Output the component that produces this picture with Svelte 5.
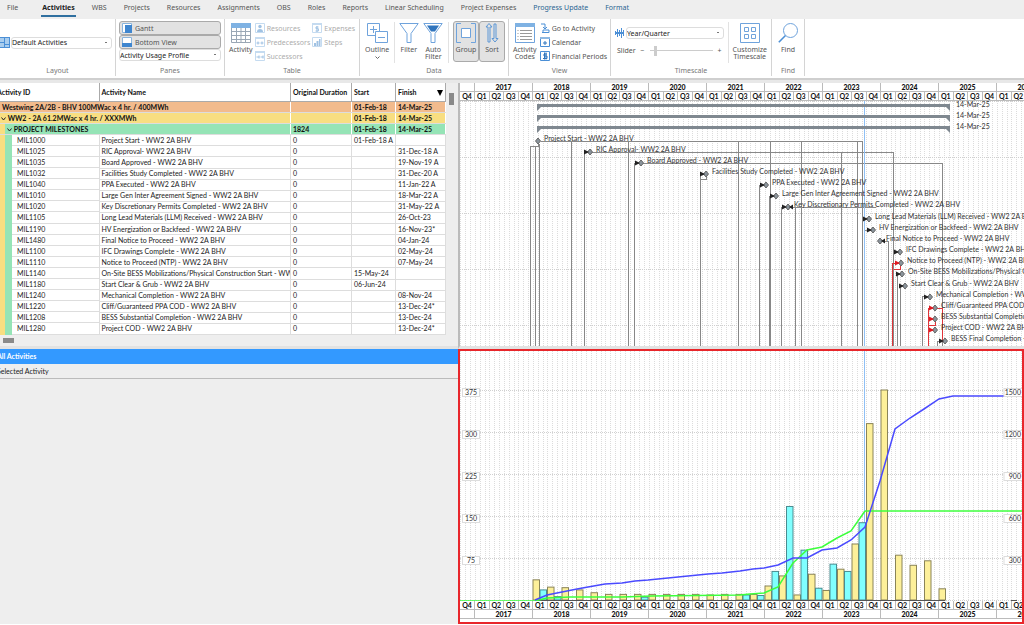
<script>
	const tabs = [
		'File', 'Activities', 'WBS', 'Projects', 'Resources', 'Assignments', 'OBS', 'Roles',
		'Reports', 'Linear Scheduling', 'Project Expenses', 'Progress Update', 'Format'
	]
	const contextTabs = ['Progress Update', 'Format']
	let activeTab = $state('Activities')

	const groups = [
		{ name: 'Westwing 2A/2B - BHV 100MWac x 4 hr. / 400MWh', level: 0, duration: '' },
		{ name: 'WW2 - 2A 61.2MWac x 4 hr. / XXXMWh', level: 1, duration: '' },
		{ name: 'PROJECT MILESTONES', level: 2, duration: '1824' }
	]

	const activities = [
		['MIL1000', 'Project Start - WW2 2A BHV', '01-Feb-18 A', ''],
		['MIL1025', 'RIC Approval- WW2 2A BHV', '', '31-Dec-18 A'],
		['MIL1035', 'Board Approved - WW2 2A BHV', '', '19-Nov-19 A'],
		['MIL1032', 'Facilities Study Completed - WW2 2A BHV', '', '31-Dec-20 A'],
		['MIL1040', 'PPA Executed - WW2 2A BHV', '', '11-Jan-22 A'],
		['MIL1010', 'Large Gen Inter Agreement Signed - WW2 2A BHV', '', '18-Mar-22 A'],
		['MIL1020', 'Key Discretionary Permits Completed - WW2 2A BHV', '', '31-May-22 A'],
		['MIL1105', 'Long Lead Materials (LLM) Received - WW2 2A BHV', '', '26-Oct-23'],
		['MIL1190', 'HV Energization or Backfeed - WW2 2A BHV', '', '16-Nov-23*'],
		['MIL1480', 'Final Notice to Proceed - WW2 2A BHV', '', '04-Jan-24'],
		['MIL1100', 'IFC Drawings Complete - WW2 2A BHV', '', '02-May-24'],
		['MIL1110', 'Notice to Proceed (NTP) - WW2 2A BHV', '', '07-May-24'],
		['MIL1140', 'On-Site BESS Mobilizations/Physical Construction Start - WW2 2A BHV', '15-May-24', ''],
		['MIL1180', 'Start Clear & Grub - WW2 2A BHV', '06-Jun-24', ''],
		['MIL1240', 'Mechanical Completion - WW2 2A BHV', '', '08-Nov-24'],
		['MIL1220', 'Cliff/Guaranteed PPA COD - WW2 2A BHV', '', '13-Dec-24*'],
		['MIL1208', 'BESS Substantial Completion - WW2 2A BHV', '', '13-Dec-24'],
		['MIL1280', 'Project COD - WW2 2A BHV', '', '13-Dec-24*']
	]

	const years = [2017, 2018, 2019, 2020, 2021, 2022, 2023, 2024, 2025, 2026, 2027, 2028, 2029, 2030]

	// milestone x on the timescale; arrow: which side the link arrives from
	const marks = [
		{ x: 78, arrow: '' },
		{ x: 130, arrow: 'in' },
		{ x: 181, arrow: 'in' },
		{ x: 246, arrow: 'in' },
		{ x: 306, arrow: 'in' },
		{ x: 316, arrow: 'in' },
		{ x: 328, arrow: 'both' },
		{ x: 409, arrow: 'in' },
		{ x: 413, arrow: 'in' },
		{ x: 420, arrow: 'out' },
		{ x: 440, arrow: 'in' },
		{ x: 441, arrow: 'in', critical: true },
		{ x: 442, arrow: 'in' },
		{ x: 445, arrow: 'in' },
		{ x: 470, arrow: 'in' },
		{ x: 475, arrow: 'in', critical: true },
		{ x: 475, arrow: 'in', critical: true },
		{ x: 475, arrow: 'in', critical: true },
		{ x: 485, arrow: 'in' }
	].map((m, i) => ({
		...m,
		y: Math.round(39.5 + i * 11.16),
		label: activities[i]?.[1] ?? 'BESS Final Completion - WW2 2A BHV'
	}))

	const links = [
		'M80 40H402V246', 'M70 246V45H78V42', 'M75 246V45', 'M79 246V42',
		'M111 246V40', 'M168 246V40', 'M278 246V40', 'M310 246V40', 'M341 246V40', 'M397 246V40',
		'M124 246V51H433V246', 'M381 246V51', 'M174 246V62H482V246',
		'M240 246V73H246V78H240', 'M299 246V84H305', 'M309 246V95H315', 'M321 246V106H415',
		'M335 246V106', 'M402 246V117H408', 'M404 246V129H411', 'M423 140H428V246',
		'M433 246V151H439', 'M437 246V173H441', 'M440 246V184H445', 'M462 246V195H470', 'M477 246V240H484'
	]
	const criticalLinks = ['M432 246V162H440V168H433', 'M468 246V207H475', 'M468 218H475V224H468', 'M468 229H475', 'M475 207H482V240']

	// [budgeted, actual] per quarter from 2018 Q1
	const usage = [
		[36, 18], [23, 6], [22, 0], [18, 0],
		[13, 0], [10, 0], [10, 0], [10, 5],
		[10, 0], [10, 0], [10, 0], [10, 0],
		[9, 0], [10, 0], [10, 9], [10, 8],
		[25, 51], [43, 167], [9, 89], [46, 21],
		[17, 64], [55, 51], [100, 138], [315, 0],
		[375, 0], [80, 0], [62, 0], [70, 0],
		[20, 0]
	]
	const base = 249
	const quarter = 14.5
	const bars = usage.flatMap(([budget, actual], i) => {
		const x = 73 + i * quarter
		return [
			{ x, h: budget * 0.56, kind: 'budget' },
			{ x: x + 7, h: actual * 0.56, kind: 'actual' }
		].filter((b) => b.h)
	})

	const cumBudget =
		'75,249 87,244 102,241 117,238 128,236 145,233 162,232 175,230 188,229 208,227 228,225 248,223 262,222 280,220 293,218 304,217 318,214 333,207 347,207 362,199 377,197 391,189 405,176 420,130 435,78 450,67 464,58 479,48 493,45 544,45'
	const cumActual =
		'0,250 75,250 87,247 110,246 162,246 192,245 280,244 290,243 304,242 318,236 333,212 347,199 362,196 377,187 391,180 405,160'

	const levels = [1, 2, 3, 4, 5]
</script>

{#snippet timescale(bottom)}
	<div class="timescale" class:bottom>
		<div class="year part">
			<b></b>
			<div class="quarters"><span>Q4</span></div>
		</div>
		{#each years as year}
			<div class="year">
				<b>{year}</b>
				<div class="quarters"><span>Q1</span><span>Q2</span><span>Q3</span><span>Q4</span></div>
			</div>
		{/each}
	</div>
{/snippet}

<div class="app">
	<nav class="tabs">
		{#each tabs as tab}
			<button
				class:active={tab === activeTab}
				class:file={tab === 'File'}
				class:context={contextTabs.includes(tab)}
				onclick={() => (activeTab = tab)}>{tab}</button>
		{/each}
	</nav>

	<div class="ribbon">
		<section class="layout">
			<div class="tools">
				<svg width="10" height="11" viewBox="0 0 10 11">
					<rect width="10" height="11" fill="#4b8fd6" />
					<path d="M0 1h4v4H0zM5 1h4v6H5zM0 6h4v4H0zM5 8h4v2H5z" fill="#a9cdee" />
				</svg>
				<select aria-label="Layout"><option>Default Activities</option></select>
			</div>
			<h2>Layout</h2>
		</section>

		<section class="panes">
			<div class="tools stack">
				<button class="pressed">
					<svg width="10" height="10" viewBox="0 0 10 10"><path d="M.5.5h9v9h-9z" fill="#fff" stroke="#8ab4dc" /><path d="M3 2h7v8H3z" fill="#3f86cf" /></svg>
					Gantt
				</button>
				<button class="pressed">
					<svg width="10" height="10" viewBox="0 0 10 10"><path d="M.5.5h9v9h-9z" fill="#fff" stroke="#8ab4dc" /><path d="M0 6h10v4H0z" fill="#3f86cf" /></svg>
					Bottom View
				</button>
				<select aria-label="Bottom view"><option>Activity Usage Profile</option></select>
			</div>
			<h2>Panes</h2>
		</section>

		<section class="table-group">
			<div class="tools">
				<button class="big">
					<svg width="20" height="20" viewBox="0 0 20 20" fill="none">
						<path d="M.5.5h19v19H.5z" fill="#fff" stroke="#9aa7b5" />
						<path d="M0 0h20v5H0z" fill="#7fb2e3" />
						<path d="M5.500 5v15M10 5v15M14.500 5v15M0 8.500h20M0 12.500h20M0 16.500h20" stroke="#9aa7b5" />
					</svg>
					Activity
				</button>
				<div class="column">
					<button disabled>
						<svg width="10" height="10" viewBox="0 0 10 10"><path d="M.5.5h9v9h-9z" fill="none" stroke="#8db8e2" /><circle cx="5" cy="3.500" r="1.700" fill="#4387c9" /><path d="M2 9q0-3 3-3t3 3z" fill="#4387c9" /></svg>
						Resources
					</button>
					<button disabled>
						<svg width="10" height="10" viewBox="0 0 10 10"><path d="M.5.5h9v9h-9z" fill="none" stroke="#8db8e2" /><path d="M0 0h10v2H0z" fill="#8db8e2" /><path d="M1.500 6h3M8.500 6h-3M3 4.500v3M7 4.500v3" stroke="#4387c9" /></svg>
						Predecessors
					</button>
					<button disabled>
						<svg width="10" height="10" viewBox="0 0 10 10"><path d="M.5.5h9v9h-9z" fill="none" stroke="#8db8e2" /><path d="M0 0h10v2H0z" fill="#8db8e2" /><path d="M1.500 6h3M5.500 6h3M4 4.500v3M8 4.500v3" stroke="#4387c9" /></svg>
						Successors
					</button>
				</div>
				<div class="column">
					<button disabled>
						<svg width="10" height="10" viewBox="0 0 10 10"><path d="M.5.5h9v9h-9z" fill="none" stroke="#8db8e2" /><path d="M0 0h10v2H0z" fill="#8db8e2" /><path d="M6.500 4H4v1.700h2.400V8H3.500M5 3v6" fill="none" stroke="#4387c9" /></svg>
						Expenses
					</button>
					<button disabled>
						<svg width="10" height="10" viewBox="0 0 10 10"><path d="M.5.5h9v9h-9z" fill="none" stroke="#8db8e2" /><path d="M2 6h2v3H2zM4.500 4h2v5h-2zM7 2h1.500v7H7z" fill="#4387c9" /></svg>
						Steps
					</button>
				</div>
			</div>
			<h2>Table</h2>
		</section>

		<section class="data">
			<div class="tools">
				<button class="big">
					<svg width="21" height="20" viewBox="0 0 21 20" fill="none" stroke="#6fa3dc">
						<path d="M8 12.500H.5V.5h12V8M8.500 8.500h12v11h-12zM3 6.500h7M6.500 3v7M11 14.500h7" />
					</svg>
					Outline
					<svg width="5" height="3" viewBox="0 0 5 3" fill="none" stroke="#666"><path d="M.5.5l2 2 2-2" /></svg>
				</button>
				<i></i>
				<button class="big">
					<svg width="20" height="20" viewBox="0 0 20 20" fill="#fff" stroke="#6fa3dc"><path d="M.8.5h18.400L12 10.500v9H8v-9z" /></svg>
					Filter
				</button>
				<button class="big">
					<svg width="20" height="20" viewBox="0 0 20 20"><path d="M.8.5h18.400L12 10.500v9H8v-9z" fill="#fff" stroke="#6fa3dc" /><path d="M4 2.500h12l-4 6H8z" fill="#2f74bd" /></svg>
					Auto<br />Filter
				</button>
				<i></i>
				<div class="toggles">
					<button class="big pressed">
						<svg width="20" height="20" viewBox="0 0 20 20" fill="none" stroke="#6fa3dc"><path d="M5 .5H.5v19H5M15 .5h4.500v19H15" /><path d="M5.500 5.500h9v9h-9z" fill="#fff" /></svg>
						Group
					</button>
					<button class="big pressed">
						<svg width="14" height="20" viewBox="0 0 14 20" fill="none" stroke="#5c97d6"><path d="M3 19V4H1l3-3.500L7 4H5v15zM9 1v14.500H7l3 3.500 3-3.500h-2V1z" /></svg>
						Sort
					</button>
				</div>
			</div>
			<h2>Data</h2>
		</section>

		<section class="view">
			<div class="tools">
				<button class="big">
					<svg width="20" height="20" viewBox="0 0 20 20"><path d="M.5.5h19v19H.5z" fill="#fff" stroke="#6fa3dc" /><path d="M0 0h20v4H0z" fill="#7fb2e3" /><path d="M5 7.500h12M5 10.500h12M5 13.500h12M5 16.500h12M2.500 7.500h1M2.500 10.500h1M2.500 13.500h1M2.500 16.500h1" stroke="#999" /></svg>
					Activity<br />Codes
				</button>
				<div class="column">
					<button>
						<svg width="10" height="10" viewBox="0 0 10 10" fill="none" stroke="#4b8fd6"><path d="M1 1h4v4M3 4l2 2 2-2M3 9.500V7h6v2.500H2" /></svg>
						Go to Activity
					</button>
					<button>
						<svg width="10" height="10" viewBox="0 0 10 10"><path d="M.5.5h9v9h-9z" fill="#fff" stroke="#4b8fd6" /><path d="M0 0h10v2H0z" fill="#8db8e2" /><path d="M3 6h4M5 4v4" stroke="#2f74bd" /></svg>
						Calendar
					</button>
					<button>
						<svg width="10" height="10" viewBox="0 0 10 10"><path d="M.5.5h9v9h-9z" fill="#fff" stroke="#4b8fd6" /><path d="M7 3H4v2h3v2.500H3M4.500 1.500v7M6 1.500v7" fill="none" stroke="#2f74bd" /></svg>
						Financial Periods
					</button>
				</div>
			</div>
			<h2>View</h2>
		</section>

		<section class="scale">
			<div class="tools">
				<div class="scale-controls">
					<div class="scale-row">
						<svg width="10" height="10" viewBox="0 0 10 10" fill="#4b8fd6"><path d="M0 3h1v4H0zM1 4h8v2H1zM2 1h1v8H2zM4 2h1v6H4zM6 0h1v10H6zM8 2h1v6H8z" /></svg>
						<select aria-label="Timescale"><option>Year/Quarter</option></select>
					</div>
					<div class="scale-row slider">
						<label for="zoom">Slider</label>
						<span>−</span>
						<input id="zoom" type="range" min="0" max="100" value="8" />
						<span>+</span>
					</div>
				</div>
				<i></i>
				<button class="big">
					<svg width="20" height="20" viewBox="0 0 20 20" fill="none" stroke="#6fa3dc"><path d="M.5.5h19v19H.5zM4.500 4.500h4v4h-4zM11.500 4.500h4v4h-4zM4.500 11.500h4v4h-4zM11.500 11.500h4v4h-4z" /></svg>
					Customize<br />Timescale
				</button>
			</div>
			<h2>Timescale</h2>
		</section>

		<section class="find">
			<div class="tools">
				<button class="big">
					<svg width="20" height="20" viewBox="0 0 20 20" fill="none" stroke="#6fa3dc"><circle cx="12.500" cy="7.500" r="7" /><path d="M7.500 12.500L.8 19.200" stroke="#4b8fd6" stroke-width="1.600" /></svg>
					Find
				</button>
			</div>
			<h2>Find</h2>
		</section>
	</div>

	<main>
		<div class="grid-pane">
			<div class="table-wrap">
				<table>
					<colgroup><col class="c-id" /><col /><col class="c-dur" /><col class="c-start" /><col class="c-finish" /></colgroup>
					<thead>
						<tr>
							<th><span class="tucked">Activity ID</span></th>
							<th>Activity Name</th>
							<th>Original Duration</th>
							<th>Start</th>
							<th class="sorted">Finish<svg width="6" height="6" viewBox="0 0 6 6"><path d="M0 0h6L3 6z" /></svg></th>
						</tr>
					</thead>
					<tbody>
						{#each groups as g}
							<tr class="group level{g.level}">
								<td colspan="2">
									{#if g.level}<svg width="5" height="4" viewBox="0 0 5 4" fill="none" stroke="#222"><path d="M.5.5l2 2.500 2-2.500" /></svg>{/if}
									{g.name}
								</td>
								<td>{g.duration}</td>
								<td>01-Feb-18</td>
								<td>14-Mar-25</td>
							</tr>
						{/each}
						{#each activities as [id, name, start, finish]}
							<tr>
								<td class="id">{id}</td>
								<td>{name}</td>
								<td>0</td>
								<td>{start}</td>
								<td>{finish}</td>
							</tr>
						{/each}
					</tbody>
				</table>
				<div class="vscroll"><span></span></div>
			</div>
			<div class="hscroll"><span></span></div>
		</div>

		<div class="gantt-pane">
			{@render timescale(false)}
			<svg class="gantt" width="100%" height="245">
				<defs>
					<pattern id="months" x="15" width="29" height="2" patternUnits="userSpaceOnUse">
						<path d="M.5 0v1M5.500 0v1M10.500 0v1M14.500 0v1M19.500 0v1M24.500 0v1" stroke="#dcdcdc" />
					</pattern>
					<pattern id="rows" y="56" width="2" height="56" patternUnits="userSpaceOnUse">
						<path d="M0 .5h1" stroke="#d0d0d0" />
					</pattern>
				</defs>
				<rect width="100%" height="100%" fill="url(#months)" />
				<rect width="100%" height="100%" fill="url(#rows)" />
				<g class="links">
					{#each links as d}<path {d} />{/each}
				</g>
				<g class="links critical">
					{#each criticalLinks as d}<path {d} />{/each}
				</g>
				<path d="M404.500 0v245" class="data-date" />
				{#each [5, 16, 27] as y}
					<path d="M77 {y - 2}H490V{y + 5}L486 {y + 1}H81L77 {y + 5}z" fill="#7f8890" />
					<text x="496" y={y + 1}>14-Mar-25</text>
				{/each}
				{#each marks as m}
					<g transform="translate({m.x} {m.y})" class:critical={m.critical}>
						<path class="diamond" d="M0-3L2.500 0 0 3-2.500 0z" />
						{#if m.arrow === 'in' || m.arrow === 'both'}<path class="arrow" d="M-6-2.500L-1 0-6 2.500z" />{/if}
						{#if m.arrow === 'out' || m.arrow === 'both'}<path class="arrow" d="M5-2.500L1 0 5 2.500z" />{/if}
						<text x="6" y="0">{m.label}</text>
					</g>
				{/each}
			</svg>
		</div>

		<div class="list-pane">
			<button class="selected"><span class="tucked">All Activities</span></button>
			<button><span class="tucked">Selected Activity</span></button>
		</div>

		<div class="profile-pane">
			<svg class="profile" width="100%" height="250">
				<defs>
					<pattern id="scale-lines" y="39" width="2" height="42" patternUnits="userSpaceOnUse">
						<path d="M0 .5h1" stroke="#d0d0d0" />
					</pattern>
				</defs>
				<rect width="100%" height="100%" fill="url(#months)" />
				<rect width="100%" height="100%" fill="url(#scale-lines)" />
				<path d="M404.500 0v250" class="data-date" />
				{#each bars as b}
					<rect class={b.kind} x={b.x} y={base - b.h} width="6.500" height={b.h} />
				{/each}
				<path d="M75 249.500H485M551 249.500h6" stroke="#555" />
				<polyline points={cumActual} class="cum actual-line" />
				<line x1="405" y1="160" x2="100%" y2="160" class="cum actual-line" />
				<polyline points={cumBudget} class="cum budget-line" />
				{#each levels as n}
					<rect class="tick" x="2.500" y={base - n * 42 - 1.5} width="17" height="8" />
					<text x="11" y={base - n * 42 + 5} text-anchor="middle">{n * 75}</text>
				{/each}
				<svg x="100%" overflow="visible">
					{#each levels as n}
						<rect class="tick" x="-18" y={base - n * 42 - 1.5} width="19" height="8" />
						<text x="-1" y={base - n * 42 + 5} text-anchor="end">{n * 300}</text>
					{/each}
				</svg>
			</svg>
			{@render timescale(true)}
		</div>
	</main>
</div>

<style>
	:global(body) {
		margin: 0;
		background: #fff;
	}

	.app {
		display: flex;
		flex-direction: column;
		min-height: 100vh;
		box-sizing: border-box;
		padding-bottom: 1px;
		font: 7px/9px 'Noto Sans', 'Open Sans', sans-serif;
		color: #555;
		overflow: hidden;
	}

	button,
	select,
	input {
		font: inherit;
		color: inherit;
		margin: 0;
		padding: 0;
		border: 0;
		background: none;
	}

	button {
		white-space: nowrap;
	}

	svg {
		flex: none;
	}

	/* tabs */
	.tabs {
		display: flex;
		gap: 15px;
		height: 19px;
		padding-left: 6px;
		background: #eee;

		button {
			height: 17px;
			padding: 0 1px;
			border-bottom: 2px solid transparent;
		}

		.file {
			margin-right: 7px;
		}

		.active {
			font-weight: bold;
			color: #222;
			border-color: #2f6f9f;
		}

		.context {
			color: #2a6592;
		}
	}

	/* ribbon */
	.ribbon {
		display: flex;
		height: 59px;
		border-bottom: 2px solid #cfcfcf;

		section {
			display: flex;
			flex-direction: column;
			flex: none;
			box-sizing: border-box;
			border-right: 1px solid #d4d4d4;
			margin-bottom: 2px;
		}

		h2 {
			margin: 0;
			font-size: 7px;
			font-weight: normal;
			text-align: center;
			color: #777;
			height: 10px;
		}

		i {
			width: 1px;
			margin: 3px 0;
			background: #e2e2e2;
		}

		select {
			appearance: none;
			box-sizing: border-box;
			height: 12px;
			border: 1px solid #ddd;
			border-radius: 3px;
			color: #222;
			background: conic-gradient(from -35deg at 50% 100%, #777 70deg, transparent 0) right 3px center / 4px 2px no-repeat #fff;
		}
	}

	.tools {
		flex: 1;
		display: flex;
	}

	.big {
		display: flex;
		flex-direction: column;
		align-items: center;
		line-height: 7px;
		text-align: center;
		padding-top: 4px;
		gap: 3px;
	}

	.column {
		display: flex;
		flex-direction: column;
		padding-top: 3px;
		gap: 2px;

		button {
			display: flex;
			align-items: center;
			gap: 2px;
			height: 12px;
		}

		button:disabled {
			opacity: 0.5;
		}
	}

	.pressed {
		box-sizing: border-box;
		border: 1px solid #aaa;
		border-radius: 3px;
		background: #e2e2e2;
	}

	.layout {
		width: 116px;

		.tools {
			align-items: center;
		}

		select {
			flex: 1;
			margin: 0 3px 0 1px;
		}
	}

	.panes {
		width: 109px;

		.stack {
			flex-direction: column;
			padding: 2px 3px 0;
		}

		.pressed {
			display: flex;
			align-items: center;
			gap: 3px;
			height: 14px;
			padding-left: 2px;
		}
	}

	.table-group {
		width: 135px;

		.tools {
			padding-left: 4px;
			gap: 2px;
		}
	}

	.data {
		width: 149px;

		.tools {
			justify-content: space-between;
			padding: 0 3px 0 5px;
		}

		.toggles {
			display: flex;
			padding: 2px 0;
		}

		.pressed {
			width: 26px;
			height: 41px;
			padding-top: 1px;
		}
	}

	.view {
		width: 102px;

		.tools {
			padding-left: 4px;
			gap: 3px;
		}
	}

	.scale {
		width: 161px;

		.tools {
			gap: 4px;
			padding: 0 4px;
		}

		.scale-controls {
			flex: 1;
			min-width: 0;
			padding-top: 8px;
		}

		.scale-row {
			display: flex;
			align-items: center;
			gap: 1px;
			margin-bottom: 6px;
		}

		select {
			flex: 1;
			min-width: 0;
		}

		.slider {
			gap: 5px;
			padding: 0 2px;
		}
	}

	input[type='range'] {
		appearance: none;
		flex: 1;
		width: 0;
		min-width: 0;
		height: 11px;
		background: linear-gradient(#ccc, #ccc) center / 100% 1px no-repeat;

		&::-webkit-slider-thumb {
			appearance: none;
			width: 3px;
			height: 10px;
			background: #ccc;
		}
	}

	.find {
		width: 33px;

		.tools {
			justify-content: center;
		}
	}

	/* workspace */
	main {
		flex: 1;
		display: grid;
		grid-template-columns: minmax(0, 458fr) minmax(0, 566fr);
		grid-template-rows: auto 1fr;
		border-top: 3px solid #e8e8e8;
		font-family: Lato, sans-serif;
		color: #222;
	}

	.grid-pane,
	.list-pane {
		background: #eee;
	}

	.grid-pane {
		border-bottom: 3px solid #e2e2e2;
	}

	.table-wrap {
		display: flex;
		height: 252px;
	}

	table {
		flex: 1;
		width: 0;
		height: 252px;
		border-collapse: collapse;
		table-layout: fixed;
		background: #fff;
	}

	.c-id {
		width: 99px;
	}

	.c-dur {
		width: 61px;
	}

	.c-start {
		width: 44px;
	}

	.c-finish {
		width: 50px;
	}

	th,
	td {
		padding: 0 0 0 2px;
		text-align: left;
		line-height: 9px;
		white-space: nowrap;
		overflow: hidden;
		border-right: 1px solid #ddd;
		border-bottom: 1px solid #ddd;
	}

	th {
		height: 18px;
		border-color: #aaa;
		color: #111;
	}

	.sorted svg {
		float: right;
		margin: 2px 2px 0 0;
	}

	.tucked {
		display: block;
		margin-left: -5px;
	}

	/* group colours run down the left edge, unbroken by the row lines */
	.id {
		padding-left: 17px;
		border-bottom: 0;
		background:
			linear-gradient(90deg, #f8de81 5px, #95e4b6 5px) 0 0 / 12px 100% no-repeat,
			linear-gradient(#ddd, #ddd) 0 100% / 100% 1px no-repeat;
	}

	.group td {
		font-weight: bold;
		color: #111;
		border-right-color: transparent;
	}

	.level0 {
		background: #f2bb8d;
	}

	.level1 {
		background: #f8de81;

		td:first-child {
			padding-left: 1px;
		}
	}

	.level2 {
		background: linear-gradient(90deg, #f8de81 5px, #95e4b6 5px);

		td:first-child {
			padding-left: 7px;
		}
	}

	.vscroll {
		width: 12px;

		span {
			display: block;
			width: 5px;
			height: 12px;
			margin: 10px 3px;
			background: #8a8a8a;
		}
	}

	.hscroll {
		height: 11px;
		padding: 3px;
		box-sizing: border-box;

		span {
			display: block;
			width: 11px;
			height: 5px;
			background: #8a8a8a;
		}
	}

	.gantt-pane {
		border-left: 2px solid #bbb;
		border-bottom: 3px solid #e2e2e2;
		min-width: 0;
	}

	.gantt,
	.profile {
		display: block;
	}

	.timescale {
		display: flex;
		overflow: hidden;
		color: #111;
		font-weight: bold;
	}

	.year {
		flex: none;
		width: 58px;
		box-sizing: border-box;
		display: flex;
		flex-direction: column;

		b,
		span {
			box-sizing: border-box;
			height: 9px;
			line-height: 8px;
			text-align: center;
			border-right: 1px solid #bbb;
			border-bottom: 1px solid #bbb;
		}
	}

	.quarters {
		display: grid;
		grid-template-columns: repeat(4, 1fr);
	}

	.part {
		width: 15px;

		.quarters {
			grid-template-columns: 1fr;
		}
	}

	.bottom .year {
		flex-direction: column-reverse;
	}

	text {
		font-size: 7px;
		fill: #333;
	}

	.links path {
		fill: none;
		stroke: #888;
		transform: translate(0.5px, 0.5px);
		shape-rendering: crispEdges;
	}

	.links.critical path {
		stroke: #e0353a;
	}

	.diamond {
		fill: #8a949c;
		stroke: #666;
	}

	.arrow {
		fill: #222;
	}

	.critical .arrow {
		fill: #e01b22;
	}

	.data-date {
		stroke: #8fc0f5;
	}

	/* bottom panes */
	.list-pane {
		display: flex;
		flex-direction: column;

		button {
			height: 15px;
			text-align: left;
			overflow: hidden;
			border-bottom: 1px solid #bbb;
			padding-left: 2px;
		}

		.selected {
			background: #3399ff;
			color: #fff;
			font-weight: bold;
			border: 0;
		}
	}

	.profile-pane {
		min-width: 0;
		border: 2px solid #e8262b;
		padding-bottom: 3px;
	}

	.budget {
		fill: #fdf09a;
		stroke: #8a8458;
	}

	.actual {
		fill: #80ffff;
		stroke: #4a8c90;
	}

	.cum {
		fill: none;
		stroke-width: 1.5;
	}

	.budget-line {
		stroke: #4a4aff;
	}

	.actual-line {
		stroke: #3cff3c;
	}

	.tick {
		fill: #fff;
		stroke: #ddd;
	}
</style>
